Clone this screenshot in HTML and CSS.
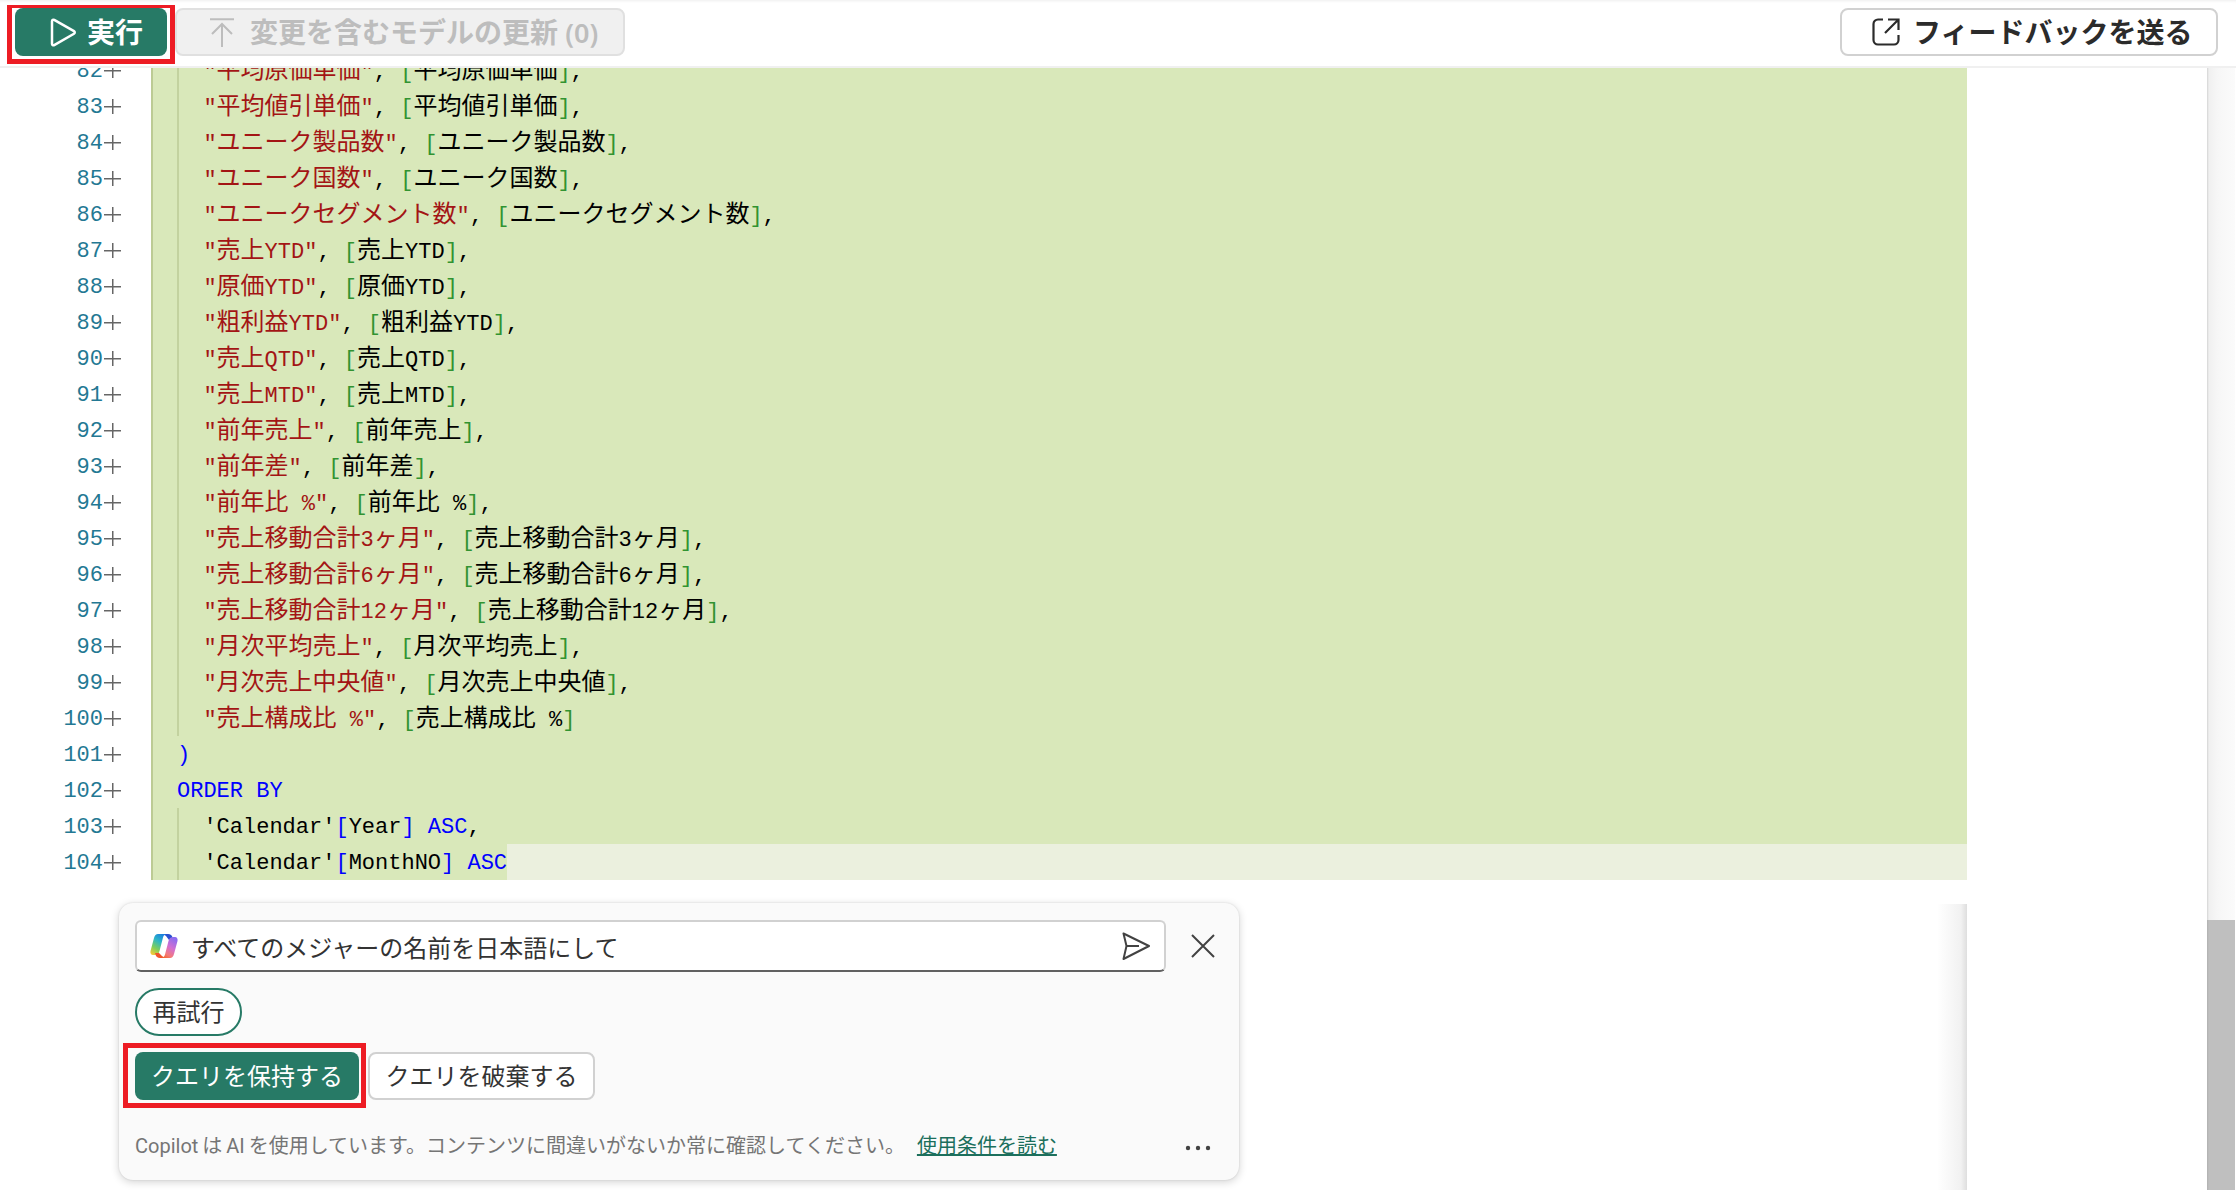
FILE: index.html
```html
<!DOCTYPE html>
<html lang="ja">
<head>
<meta charset="utf-8">
<title>DAX クエリ</title>
<link rel="stylesheet" href="styles.css">
</head>
<body>
<header class="topbar">
  <button class="tbtn run">
    <svg class="ico-run" viewBox="0 0 26 29"><path d="M2 3.2C2 2 3.2 1.3 4.2 1.9L24 13.2C25 13.8 25 15.2 24 15.8L4.2 27.1C3.2 27.7 2 27 2 25.8Z"/></svg>
    <span>実行</span>
    <span class="redbox redbox-run"></span>
  </button>
  <button class="tbtn update">
    <svg class="ico-up" viewBox="0 0 24 29"><path d="M0 1.2H24M12 29V6M2 16L12 6L22 16"/></svg>
    <span>変更を含むモデルの更新 <span class="zero">(0)</span></span>
  </button>
  <button class="tbtn feedback">
    <svg class="ico-share" viewBox="0 0 28 28"><path d="M11 1.5H6A4.5 4.5 0 0 0 1.5 6V22A4.5 4.5 0 0 0 6 26.500H22A4.500 4.500 0 0 0 26.500 22V17M16 1.500H26.500V12M26 2L13 15"/></svg>
    <span>フィードバックを送る</span>
  </button>
</header>
<main class="body">
  <section class="pane">
    <div class="editor">
      <div class="row"><span class="num">82</span><span class="plus"></span><div class="code in"><span class="s">"<i>平均原価単価</i>"</span>, <span class="b">[</span><i>平均原価単価</i><span class="b">]</span>,</div></div>
      <div class="row"><span class="num">83</span><span class="plus"></span><div class="code in"><span class="s">"<i>平均値引単価</i>"</span>, <span class="b">[</span><i>平均値引単価</i><span class="b">]</span>,</div></div>
      <div class="row"><span class="num">84</span><span class="plus"></span><div class="code in"><span class="s">"<i>ユニーク製品数</i>"</span>, <span class="b">[</span><i>ユニーク製品数</i><span class="b">]</span>,</div></div>
      <div class="row"><span class="num">85</span><span class="plus"></span><div class="code in"><span class="s">"<i>ユニーク国数</i>"</span>, <span class="b">[</span><i>ユニーク国数</i><span class="b">]</span>,</div></div>
      <div class="row"><span class="num">86</span><span class="plus"></span><div class="code in"><span class="s">"<i>ユニークセグメント数</i>"</span>, <span class="b">[</span><i>ユニークセグメント数</i><span class="b">]</span>,</div></div>
      <div class="row"><span class="num">87</span><span class="plus"></span><div class="code in"><span class="s">"<i>売上</i>YTD"</span>, <span class="b">[</span><i>売上</i>YTD<span class="b">]</span>,</div></div>
      <div class="row"><span class="num">88</span><span class="plus"></span><div class="code in"><span class="s">"<i>原価</i>YTD"</span>, <span class="b">[</span><i>原価</i>YTD<span class="b">]</span>,</div></div>
      <div class="row"><span class="num">89</span><span class="plus"></span><div class="code in"><span class="s">"<i>粗利益</i>YTD"</span>, <span class="b">[</span><i>粗利益</i>YTD<span class="b">]</span>,</div></div>
      <div class="row"><span class="num">90</span><span class="plus"></span><div class="code in"><span class="s">"<i>売上</i>QTD"</span>, <span class="b">[</span><i>売上</i>QTD<span class="b">]</span>,</div></div>
      <div class="row"><span class="num">91</span><span class="plus"></span><div class="code in"><span class="s">"<i>売上</i>MTD"</span>, <span class="b">[</span><i>売上</i>MTD<span class="b">]</span>,</div></div>
      <div class="row"><span class="num">92</span><span class="plus"></span><div class="code in"><span class="s">"<i>前年売上</i>"</span>, <span class="b">[</span><i>前年売上</i><span class="b">]</span>,</div></div>
      <div class="row"><span class="num">93</span><span class="plus"></span><div class="code in"><span class="s">"<i>前年差</i>"</span>, <span class="b">[</span><i>前年差</i><span class="b">]</span>,</div></div>
      <div class="row"><span class="num">94</span><span class="plus"></span><div class="code in"><span class="s">"<i>前年比</i> %"</span>, <span class="b">[</span><i>前年比</i> %<span class="b">]</span>,</div></div>
      <div class="row"><span class="num">95</span><span class="plus"></span><div class="code in"><span class="s">"<i>売上移動合計</i>3<i>ヶ月</i>"</span>, <span class="b">[</span><i>売上移動合計</i>3<i>ヶ月</i><span class="b">]</span>,</div></div>
      <div class="row"><span class="num">96</span><span class="plus"></span><div class="code in"><span class="s">"<i>売上移動合計</i>6<i>ヶ月</i>"</span>, <span class="b">[</span><i>売上移動合計</i>6<i>ヶ月</i><span class="b">]</span>,</div></div>
      <div class="row"><span class="num">97</span><span class="plus"></span><div class="code in"><span class="s">"<i>売上移動合計</i>12<i>ヶ月</i>"</span>, <span class="b">[</span><i>売上移動合計</i>12<i>ヶ月</i><span class="b">]</span>,</div></div>
      <div class="row"><span class="num">98</span><span class="plus"></span><div class="code in"><span class="s">"<i>月次平均売上</i>"</span>, <span class="b">[</span><i>月次平均売上</i><span class="b">]</span>,</div></div>
      <div class="row"><span class="num">99</span><span class="plus"></span><div class="code in"><span class="s">"<i>月次売上中央値</i>"</span>, <span class="b">[</span><i>月次売上中央値</i><span class="b">]</span>,</div></div>
      <div class="row"><span class="num">100</span><span class="plus"></span><div class="code in"><span class="s">"<i>売上構成比</i> %"</span>, <span class="b">[</span><i>売上構成比</i> %<span class="b">]</span></div></div>
      <div class="row"><span class="num">101</span><span class="plus"></span><div class="code"><span class="k">)</span></div></div>
      <div class="row"><span class="num">102</span><span class="plus"></span><div class="code"><span class="k">ORDER BY</span></div></div>
      <div class="row"><span class="num">103</span><span class="plus"></span><div class="code in">'Calendar'<span class="k">[</span>Year<span class="k">]</span> <span class="k">ASC</span>,</div></div>
      <div class="row"><span class="num">104</span><span class="plus"></span><div class="code in last"><span class="tx">'Calendar'<span class="k">[</span>MonthNO<span class="k">]</span> <span class="k">ASC</span></span><span class="rest"></span></div></div>
    </div>
    <div class="zone">
      <div class="card">
        <div class="prompt-row">
          <div class="prompt">
            <svg class="ico-copilot" viewBox="0 0 28 26">
              <defs>
                <linearGradient id="cpa" x1="0.7" y1="0" x2="0.2" y2="1"><stop offset="0" stop-color="#1b7fe0"/><stop offset=".35" stop-color="#2db6c6"/><stop offset=".7" stop-color="#7fcf5a"/><stop offset="1" stop-color="#f2c93a"/></linearGradient>
                <linearGradient id="cpb" x1="0.7" y1="0" x2="0.2" y2="1"><stop offset="0" stop-color="#8a6cf0"/><stop offset=".45" stop-color="#d36fd0"/><stop offset=".8" stop-color="#f47a7a"/><stop offset="1" stop-color="#f2662e"/></linearGradient>
              </defs>
              <path fill="#2a4fd0" d="M13 1H18C20.500 1 22 2.500 22.500 4.500L23.500 7H19L16 3Z"/>
              <path fill="url(#cpa)" d="M8 1H17C15 1 13.500 2.500 13 4.500L9.500 18C9 20.500 7 22 5 22H3C1 22 0 20 .5 18L4 5C4.700 2.500 6 1 8 1Z"/>
              <path fill="#f0552c" d="M15 25H10C7.500 25 6 23.500 5.500 21.500L5 20H9L12 23Z"/>
              <path fill="url(#cpb)" d="M20 25H11C13 25 14.500 23.500 15 21.500L18.500 8C19 5.500 21 4 23 4H25C27 4 28 6 27.500 8L24 21C23.300 23.500 22 25 20 25Z"/>
            </svg>
            <span class="prompt-text">すべてのメジャーの名前を日本語にして</span>
            <svg class="ico-send" viewBox="0 0 28 28"><path d="M1.500 1.500L27 14L1.500 27L4.500 14ZM4.500 14H17"/></svg>
          </div>
          <svg class="ico-close" viewBox="0 0 24 24"><path d="M1 1L23 23M23 1L1 23"/></svg>
        </div>
        <button class="retry">再試行</button>
        <div class="actions">
          <button class="act keep">クエリを保持する<span class="redbox redbox-keep"></span></button>
          <button class="act discard">クエリを破棄する</button>
        </div>
        <div class="foot">
          <span class="note">Copilot は AI を使用しています。コンテンツに間違いがないか常に確認してください。</span>
          <a class="terms" href="#">使用条件を読む</a>
          <svg class="ico-dots" viewBox="0 0 26 6"><circle cx="3" cy="3" r="2.200"/><circle cx="13" cy="3" r="2.200"/><circle cx="23" cy="3" r="2.200"/></svg>
        </div>
      </div>
    </div>
  </section>
  <aside class="scrollbar"><div class="thumb"></div></aside>
</main>
</body>
</html>
```
FILE: styles.css
```css
* { box-sizing: border-box; }
html, body { margin: 0; height: 100%; }
body {
  display: flex;
  flex-direction: column;
  height: 100vh;
  overflow: hidden;
  background: #fff;
  font-family: "Noto Sans", "Noto Sans CJK JP", sans-serif;
  color: #242424;
}
button { font: inherit; cursor: default; }

/* top bar */
.topbar {
  flex: none;
  display: flex;
  gap: 8px;
  height: 68px;
  padding: 8px 18px 0 15px;
  background: #fff;
  border-bottom: 2px solid #f0f0f0;
  box-shadow: inset 0 3px 3px -2px #eee;
}
.tbtn {
  position: relative;
  display: flex;
  align-items: center;
  height: 48px;
  border-radius: 8px;
  font-size: 28px;
  font-weight: 700;
  line-height: 1;
}
.run {
  width: 152px;
  padding: 0 0 0 35px;
  gap: 11px;
  background: #277a66;
  border: none;
  color: #fff;
}
.ico-run { width: 26px; height: 29px; fill: none; stroke: #fff; stroke-width: 2.500; }
.update {
  width: 450px;
  padding: 0 0 0 33px;
  gap: 16px;
  background: #f0f0f0;
  border: 2px solid #e0e0e0;
  color: #bdbdbd;
}
.ico-up { width: 24px; height: 29px; fill: none; stroke: #bdbdbd; stroke-width: 2; }
.zero { font-family: "Noto Sans", sans-serif; font-weight: 600; font-size: 27px; }
.feedback {
  width: 378px;
  margin-left: auto;
  padding: 0 0 0 30px;
  gap: 13px;
  background: #fff;
  border: 2px solid #d1d1d1;
  color: #2b2b2b;
}
.ico-share { width: 28px; height: 28px; fill: none; stroke: #2b2b2b; stroke-width: 2.200; }

/* annotation overlays */
.redbox { position: absolute; border: 5px solid #ed1c24; pointer-events: none; }
.redbox-run { top: -3px; left: -8px; right: -8px; bottom: -8px; border-top-width: 3px; }
.redbox-keep { top: -9px; left: -12px; right: -7px; bottom: -8px; }

/* main */
.body { flex: 1; min-height: 0; display: flex; }
.pane { width: 2207px; flex: none; overflow: hidden; display: flex; flex-direction: column; }
.scrollbar {
  width: 28px;
  flex: none;
  display: flex;
  flex-direction: column;
  justify-content: flex-end;
  background: linear-gradient(to right, #d4d4d4, #f0f0f0 2px, #f6f6f6 10px, #fbfbfb);
}
.thumb { height: 270px; background: linear-gradient(to right, #b0b0b0, #bfbfbf 2px); }

/* code */
.editor {
  width: 1967px;
  margin-top: -16px;
  flex: none;
  font-family: "Liberation Mono", "Noto Sans CJK JP", monospace;
  font-size: 22px;
  line-height: 39px;
}
.row { display: flex; height: 36px; }
.num { width: 103px; flex: none; text-align: right; color: #237893; }
.plus {
  width: 48px;
  flex: none;
  background-image: linear-gradient(#666, #666), linear-gradient(#666, #666);
  background-repeat: no-repeat;
  background-size: 17px 1.500px, 1.500px 15px;
  background-position: 1px 18px, 9px 11px;
}
.code {
  flex: 1;
  white-space: pre;
  padding-left: 24px;
  background-color: #d9e8ba;
  border-left: 2px solid #bccb94;
  color: #000;
}
.code.in {
  padding-left: 50.400px;
  background-image: linear-gradient(#c3d29f, #c3d29f);
  background-size: 2px 100%;
  background-position: 24px 0;
  background-repeat: no-repeat;
}
.code.last { display: flex; }
.code i { font-style: normal; font-size: 24px; }
.s { color: #a31515; }
.b { color: #319331; }
.k { color: #0000ff; }
.rest { flex: 1; background: #ebf0de; }

/* zone */
.zone {
  flex: 1;
  width: 1967px;
  margin-top: 24px;
  padding-left: 119px;
  background: linear-gradient(to right, transparent calc(100% - 30px), #f1f1f1 calc(100% - 6px), #dedede 100%);
}
.card {
  width: 1120px;
  height: 277px;
  margin-top: -1px;
  padding: 17px 25px 0 16px;
  background: #fafafa;
  border-radius: 14px;
  box-shadow: 0 2px 8px rgba(0, 0, 0, .18), 0 0 2px rgba(0, 0, 0, .12);
}
.prompt-row { display: flex; align-items: center; gap: 25px; }
.prompt {
  width: 1031px;
  height: 52px;
  flex: none;
  display: flex;
  align-items: center;
  padding: 0 14px 0 13px;
  background: #fff;
  border: 2px solid #d1d1d1;
  border-bottom-color: #616161;
  border-radius: 6px;
}
.ico-copilot { width: 28px; height: 26px; flex: none; }
.prompt-text { margin-left: 13px; flex: 1; font-size: 24px; color: #333; }
.ico-send { width: 28px; height: 28px; flex: none; fill: none; stroke: #424242; stroke-width: 2; stroke-linejoin: round; }
.ico-close { width: 24px; height: 24px; flex: none; fill: none; stroke: #424242; stroke-width: 2; }
.retry {
  display: block;
  width: 107px;
  height: 48px;
  margin-top: 16px;
  padding: 0;
  background: #fff;
  border: 2px solid #277a66;
  border-radius: 24px;
  font-size: 24px;
  line-height: 1;
  color: #333;
}
.actions { display: flex; gap: 9px; margin-top: 16px; }
.act {
  position: relative;
  height: 48px;
  padding: 0;
  border-radius: 8px;
  font-size: 24px;
  line-height: 1;
}
.keep { width: 224px; background: #277a66; border: none; color: #fff; }
.discard { width: 227px; background: #fff; border: 2px solid #d1d1d1; color: #333; }
.foot { display: flex; align-items: center; height: 28px; margin-top: 30px; margin-right: 3px; font-size: 20px; }
.note { color: #757575; font-family: Roboto, "Noto Sans CJK JP", sans-serif; word-spacing: -1px; }
.terms { margin-left: 12px; color: #1c6f5c; text-decoration: underline; }
.ico-dots { width: 26px; height: 6px; margin-left: auto; margin-top: 8px; fill: #424242; }
```
